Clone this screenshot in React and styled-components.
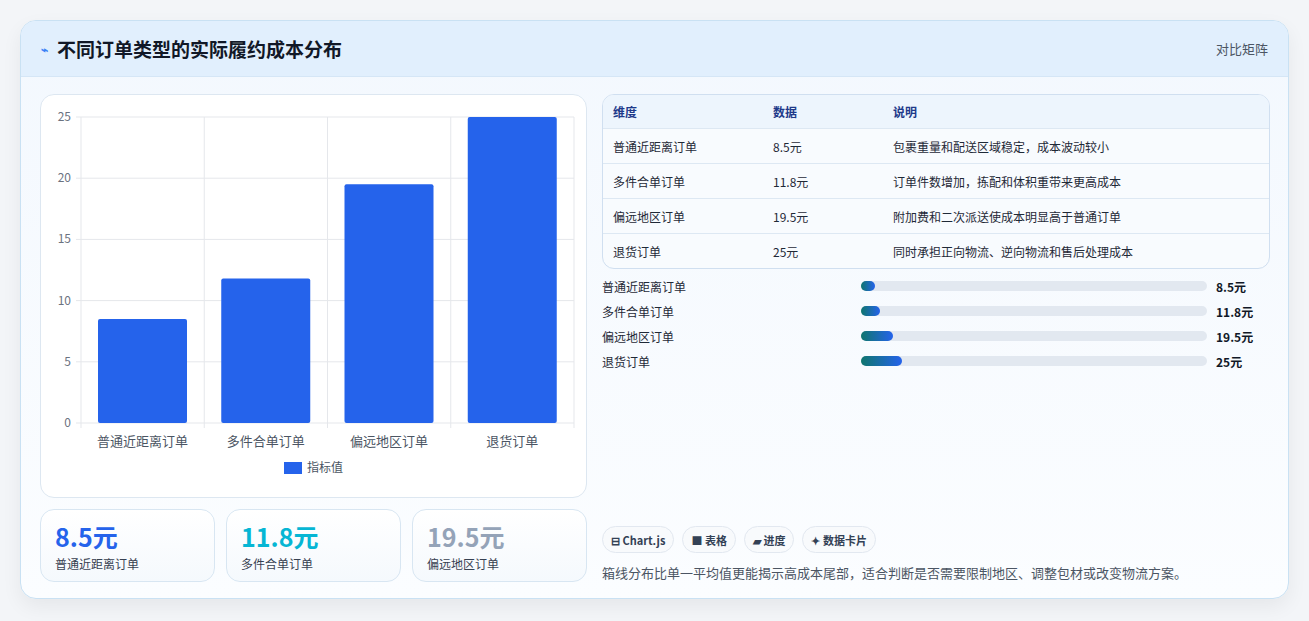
import React from "react";
import styled, { createGlobalStyle } from "styled-components";

const G = createGlobalStyle`
  body{margin:0;background:#f3f5f8;font-family:"Noto Sans CJK SC","Noto Sans",sans-serif;}
`;
const data = [
  { n: "普通近距离订单", v: 8.5, d: "包裹重量和配送区域稳定，成本波动较小" },
  { n: "多件合单订单", v: 11.8, d: "订单件数增加，拣配和体积重带来更高成本" },
  { n: "偏远地区订单", v: 19.5, d: "附加费和二次派送使成本明显高于普通订单" },
  { n: "退货订单", v: 25, d: "同时承担正向物流、逆向物流和售后处理成本" },
];
const Page = styled.div`padding:20px 20px 21px 20px;height:580px;`;
const Card = styled.div`height:579px;box-sizing:border-box;border:1px solid #c9e1f3;border-radius:16px;background:linear-gradient(180deg,#f3f8fe,#fbfdff);box-shadow:0 8px 20px rgba(0,0,0,.06);overflow:hidden;display:flex;flex-direction:column;`;
const Head = styled.div`height:55px;flex:none;display:flex;align-items:center;justify-content:space-between;padding:0 20px;background:#e1effd;border-bottom:1px solid #d5e6f6;`;
const Title = styled.h1`margin:0;font-size:19px;font-weight:700;color:#111827;display:flex;align-items:center;gap:9px;`;
const Tag = styled.span`font-size:13px;color:#4b5563;`;
const Body = styled.div`flex:1;display:grid;grid-template-columns:547px 668px;gap:15px;padding:17px 19px 19px 19px;`;
const Col = styled.div`display:flex;flex-direction:column;gap:11px;`;
const ChartBox = styled.div`height:404px;box-sizing:border-box;border:1px solid #dde7f1;border-radius:14px;background:#fff;`;
const Stats = styled.div`display:grid;grid-template-columns:repeat(3,1fr);gap:11px;`;
const Stat = styled.div`height:73px;box-sizing:border-box;border:1px solid #d8e6f2;border-radius:14px;background:linear-gradient(180deg,#fff,#f5f9fd);padding:11px 14px;`;
const Big = styled.div`font-size:25px;font-weight:700;color:${p => p.c};line-height:30px;`;
const Small = styled.div`font-size:12px;color:#374151;margin-top:4px;`;
const Table = styled.div`border:1px solid #d0dff0;border-radius:12px;overflow:hidden;background:#f8fbfe;`;
const Row = styled.div`display:grid;grid-template-columns:160px 120px 1fr;height:${p => p.h}px;align-items:center;padding-left:10px;font-size:12px;color:${p => p.hd ? "#1e3a8a" : "#1f2937"};font-weight:${p => p.hd ? 700 : 400};background:${p => p.hd ? "#edf5fd" : "transparent"};border-top:${p => p.first ? "none" : "1px solid #dde8f3"};`;
const Bars = styled.div`display:flex;flex-direction:column;gap:7px;margin-top:8px;`;
const BarRow = styled.div`display:grid;grid-template-columns:250px 346px 1fr;column-gap:9px;align-items:center;height:18px;font-size:12px;color:#1f2937;`;
const Track = styled.div`height:10px;border-radius:5px;background:#e2e8f0;`;
const Fill = styled.div`height:10px;border-radius:5px;background:linear-gradient(90deg,#0f766e,#2563eb);`;
const Val = styled.b`font-size:12px;color:#111827;`;
const Chips = styled.div`margin-top:auto;display:flex;gap:8px;`;
const Chip = styled.span`height:27px;box-sizing:border-box;padding:0 8px;border:1px solid #e2e8f0;border-radius:14px;background:#f8fafc;font-size:11px;font-weight:700;color:#334155;display:flex;align-items:center;gap:3px;`;
const Note = styled.p`margin:10px 0 0 0;font-size:13px;color:#4b5563;`;

function Chart() {
  const x0 = 40, x1 = 533, y0 = 22, y1 = 328, w = (x1 - x0) / 4;
  const Y = v => y1 - (v / 25) * (y1 - y0);
  return (
    <svg width="545" height="402" style={{ display: "block" }} fontFamily='"Noto Sans CJK SC",sans-serif'>
      {[0, 5, 10, 15, 20, 25].map(t => (
        <g key={t}>
          <line x1={x0 - 5} x2={x1} y1={Y(t)} y2={Y(t)} stroke="#e5e7eb" />
          <text x={x0 - 10} y={Y(t) + 4} fontSize="12" fill="#6b7280" textAnchor="end">{t}</text>
        </g>
      ))}
      {[0, 1, 2, 3, 4].map(i => <line key={i} x1={x0 + i * w} x2={x0 + i * w} y1={y0} y2={y1 + 5} stroke="#e5e7eb" />)}
      {data.map((d, i) => (
        <g key={i}>
          <rect x={x0 + i * w + 17} y={Y(d.v)} width={89} height={y1 - Y(d.v)} fill="#2563eb" rx="2" />
          <text x={x0 + i * w + w / 2} y={y1 + 23} fontSize="13" fill="#4b5563" textAnchor="middle">{d.n}</text>
        </g>
      ))}
      <rect x="243" y="367" width="18" height="12" fill="#2563eb" />
      <text x="266" y="377" fontSize="12" fill="#4b5563">指标值</text>
    </svg>
  );
}

export default function App() {
  return (
    <Page>
      <G />
      <Card>
        <Head>
          <Title><span style={{ color: "#3b82f6", fontSize: 12 }}>⌁</span>不同订单类型的实际履约成本分布</Title>
          <Tag>对比矩阵</Tag>
        </Head>
        <Body>
          <Col>
            <ChartBox><Chart /></ChartBox>
            <Stats>
              <Stat><Big c="#2563eb">8.5元</Big><Small>普通近距离订单</Small></Stat>
              <Stat><Big c="#06b6d4">11.8元</Big><Small>多件合单订单</Small></Stat>
              <Stat><Big c="#94a3b8">19.5元</Big><Small>偏远地区订单</Small></Stat>
            </Stats>
          </Col>
          <Col style={{ gap: 0 }}>
            <Table>
              <Row hd first h={33}><span>维度</span><span>数据</span><span>说明</span></Row>
              {data.map(d => <Row key={d.n} h={34}><span>{d.n}</span><span>{d.v}元</span><span>{d.d}</span></Row>)}
            </Table>
            <Bars>
              {data.map(d => (
                <BarRow key={d.n}><span>{d.n}</span><Track><Fill style={{ width: `${Math.max(13, d.v * 1.64)}px` }} /></Track><Val>{d.v}元</Val></BarRow>
              ))}
            </Bars>
            <Chips>
              <Chip>⊟ Chart.js</Chip><Chip>■ 表格</Chip><Chip>▰ 进度</Chip><Chip>✦ 数据卡片</Chip>
            </Chips>
            <Note>箱线分布比单一平均值更能揭示高成本尾部，适合判断是否需要限制地区、调整包材或改变物流方案。</Note>
          </Col>
        </Body>
      </Card>
    </Page>
  );
}
